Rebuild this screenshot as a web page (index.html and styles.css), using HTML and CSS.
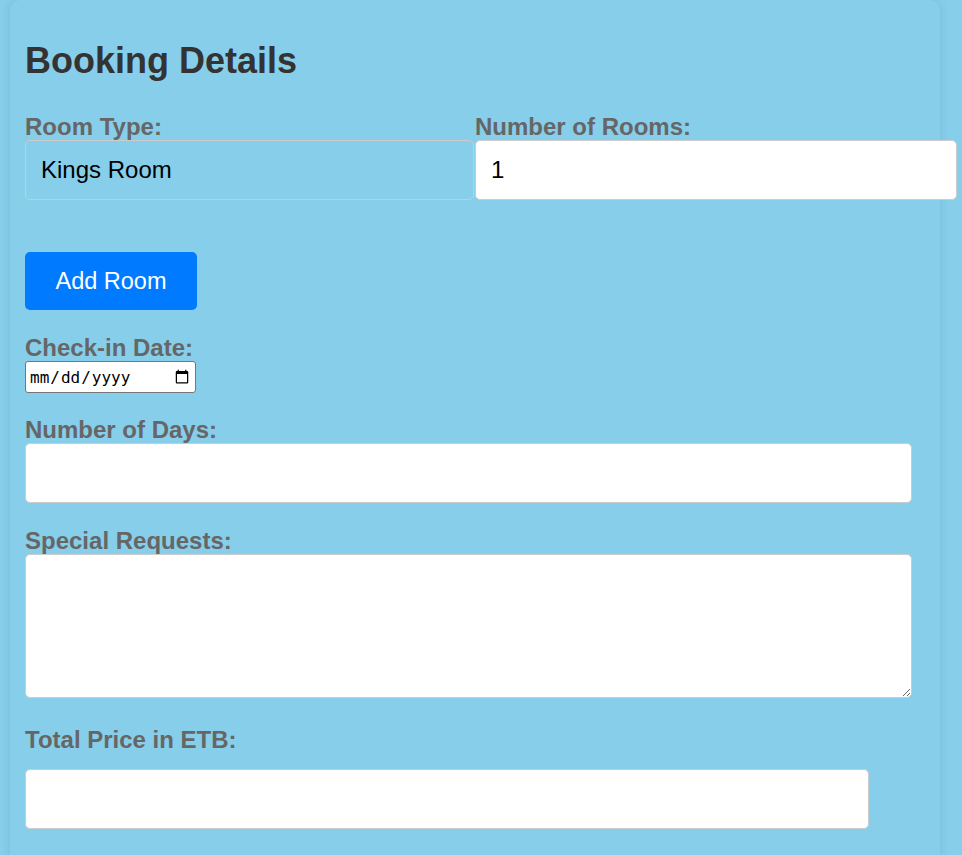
FILE: index.html
```html
<!DOCTYPE html>
<html lang="en">
<head>
<meta charset="utf-8">
<title>Booking Details</title>
<link rel="stylesheet" href="styles.css">
</head>
<body>
<div class="container">
  <h2 class="title">Booking Details</h2>
  <div class="room-row">
    <div class="group group-type">
      <label class="label" for="roomType">Room Type:</label>
      <input class="field field-clear" id="roomType" type="text" value="Kings Room" readonly>
    </div>
    <div class="group group-count">
      <label class="label" for="roomCount">Number of Rooms:</label>
      <input class="field" id="roomCount" type="number" value="1">
    </div>
  </div>
  <button class="add-btn" type="button">Add Room</button>
  <div class="block block-date">
    <label class="label" for="checkin">Check-in Date:</label>
    <input class="date" id="checkin" type="date">
  </div>
  <div class="block block-days">
    <label class="label" for="days">Number of Days:</label>
    <input class="field field-wide" id="days" type="text">
  </div>
  <div class="block block-req">
    <label class="label" for="req">Special Requests:</label>
    <textarea class="field field-wide area" id="req"></textarea>
  </div>
  <div class="block block-total">
    <label class="label label-total" for="total">Total Price in ETB:</label>
    <input class="field field-total" id="total" type="text">
  </div>
</div>
</body>
</html>
```

FILE: styles.css
```css
html, body {
  margin: 0;
  padding: 0;
  background: #87ceeb;
  font-family: "Liberation Sans", Arial, sans-serif;
}

.container {
  margin-left: 10px;
  width: 930px;
  height: 870px;
  box-sizing: border-box;
  padding: 15px;
  background: #87ceeb;
  border-radius: 10px;
  box-shadow: 0 0 10px rgba(0, 0, 0, 0.1);
}

.title {
  margin: 25px 0 0;
  font-size: 36px;
  font-weight: bold;
  color: #333;
  line-height: 41px;
}

.label {
  display: block;
  font-size: 24px;
  font-weight: bold;
  color: #666;
  line-height: 27px;
}

.room-row {
  display: flex;
  margin-top: 32px;
}

.group-type { width: 450px; flex: none; }
.group-count { width: 482px; flex: none; }

.field {
  display: block;
  box-sizing: border-box;
  width: 100%;
  height: 60px;
  padding: 0 15px;
  border: 1px solid #ccc;
  border-radius: 5px;
  background: #fff;
  font-family: "Liberation Sans", Arial, sans-serif;
  font-size: 24px;
  color: #000;
  outline: none;
}

.group-type .field { width: 449px; }

.field-clear {
  background: transparent;
}

.field::-webkit-inner-spin-button,
.field::-webkit-outer-spin-button {
  -webkit-appearance: none;
  margin: 0;
}

.add-btn {
  display: block;
  margin-top: 52px;
  width: 172px;
  height: 58px;
  padding: 0;
  border: none;
  border-radius: 5px;
  background: #007bff;
  color: #fff;
  font-family: "Liberation Sans", Arial, sans-serif;
  font-size: 23.5px;
}

.block-date { margin-top: 24px; }

.date {
  display: block;
  box-sizing: border-box;
  width: 171px;
  height: 32px;
  margin: 0;
  font-family: "DejaVu Sans Mono", "Liberation Mono", monospace;
  font-size: 16px;
  color: #000;
  background: #fff;
  border: 1px solid #767676;
  border-radius: 3px;
  padding: 1px 3px;
}

.block-days { margin-top: 23px; }

.field-wide { width: 887px; }

.block-req { margin-top: 24px; }

.area {
  height: 144px;
  resize: vertical;
  padding: 15px;
}

.block-total { margin-top: 28px; }

.label-total { margin-bottom: 16px; }

.field-total {
  width: 844px;
  height: 60px;
}
```
